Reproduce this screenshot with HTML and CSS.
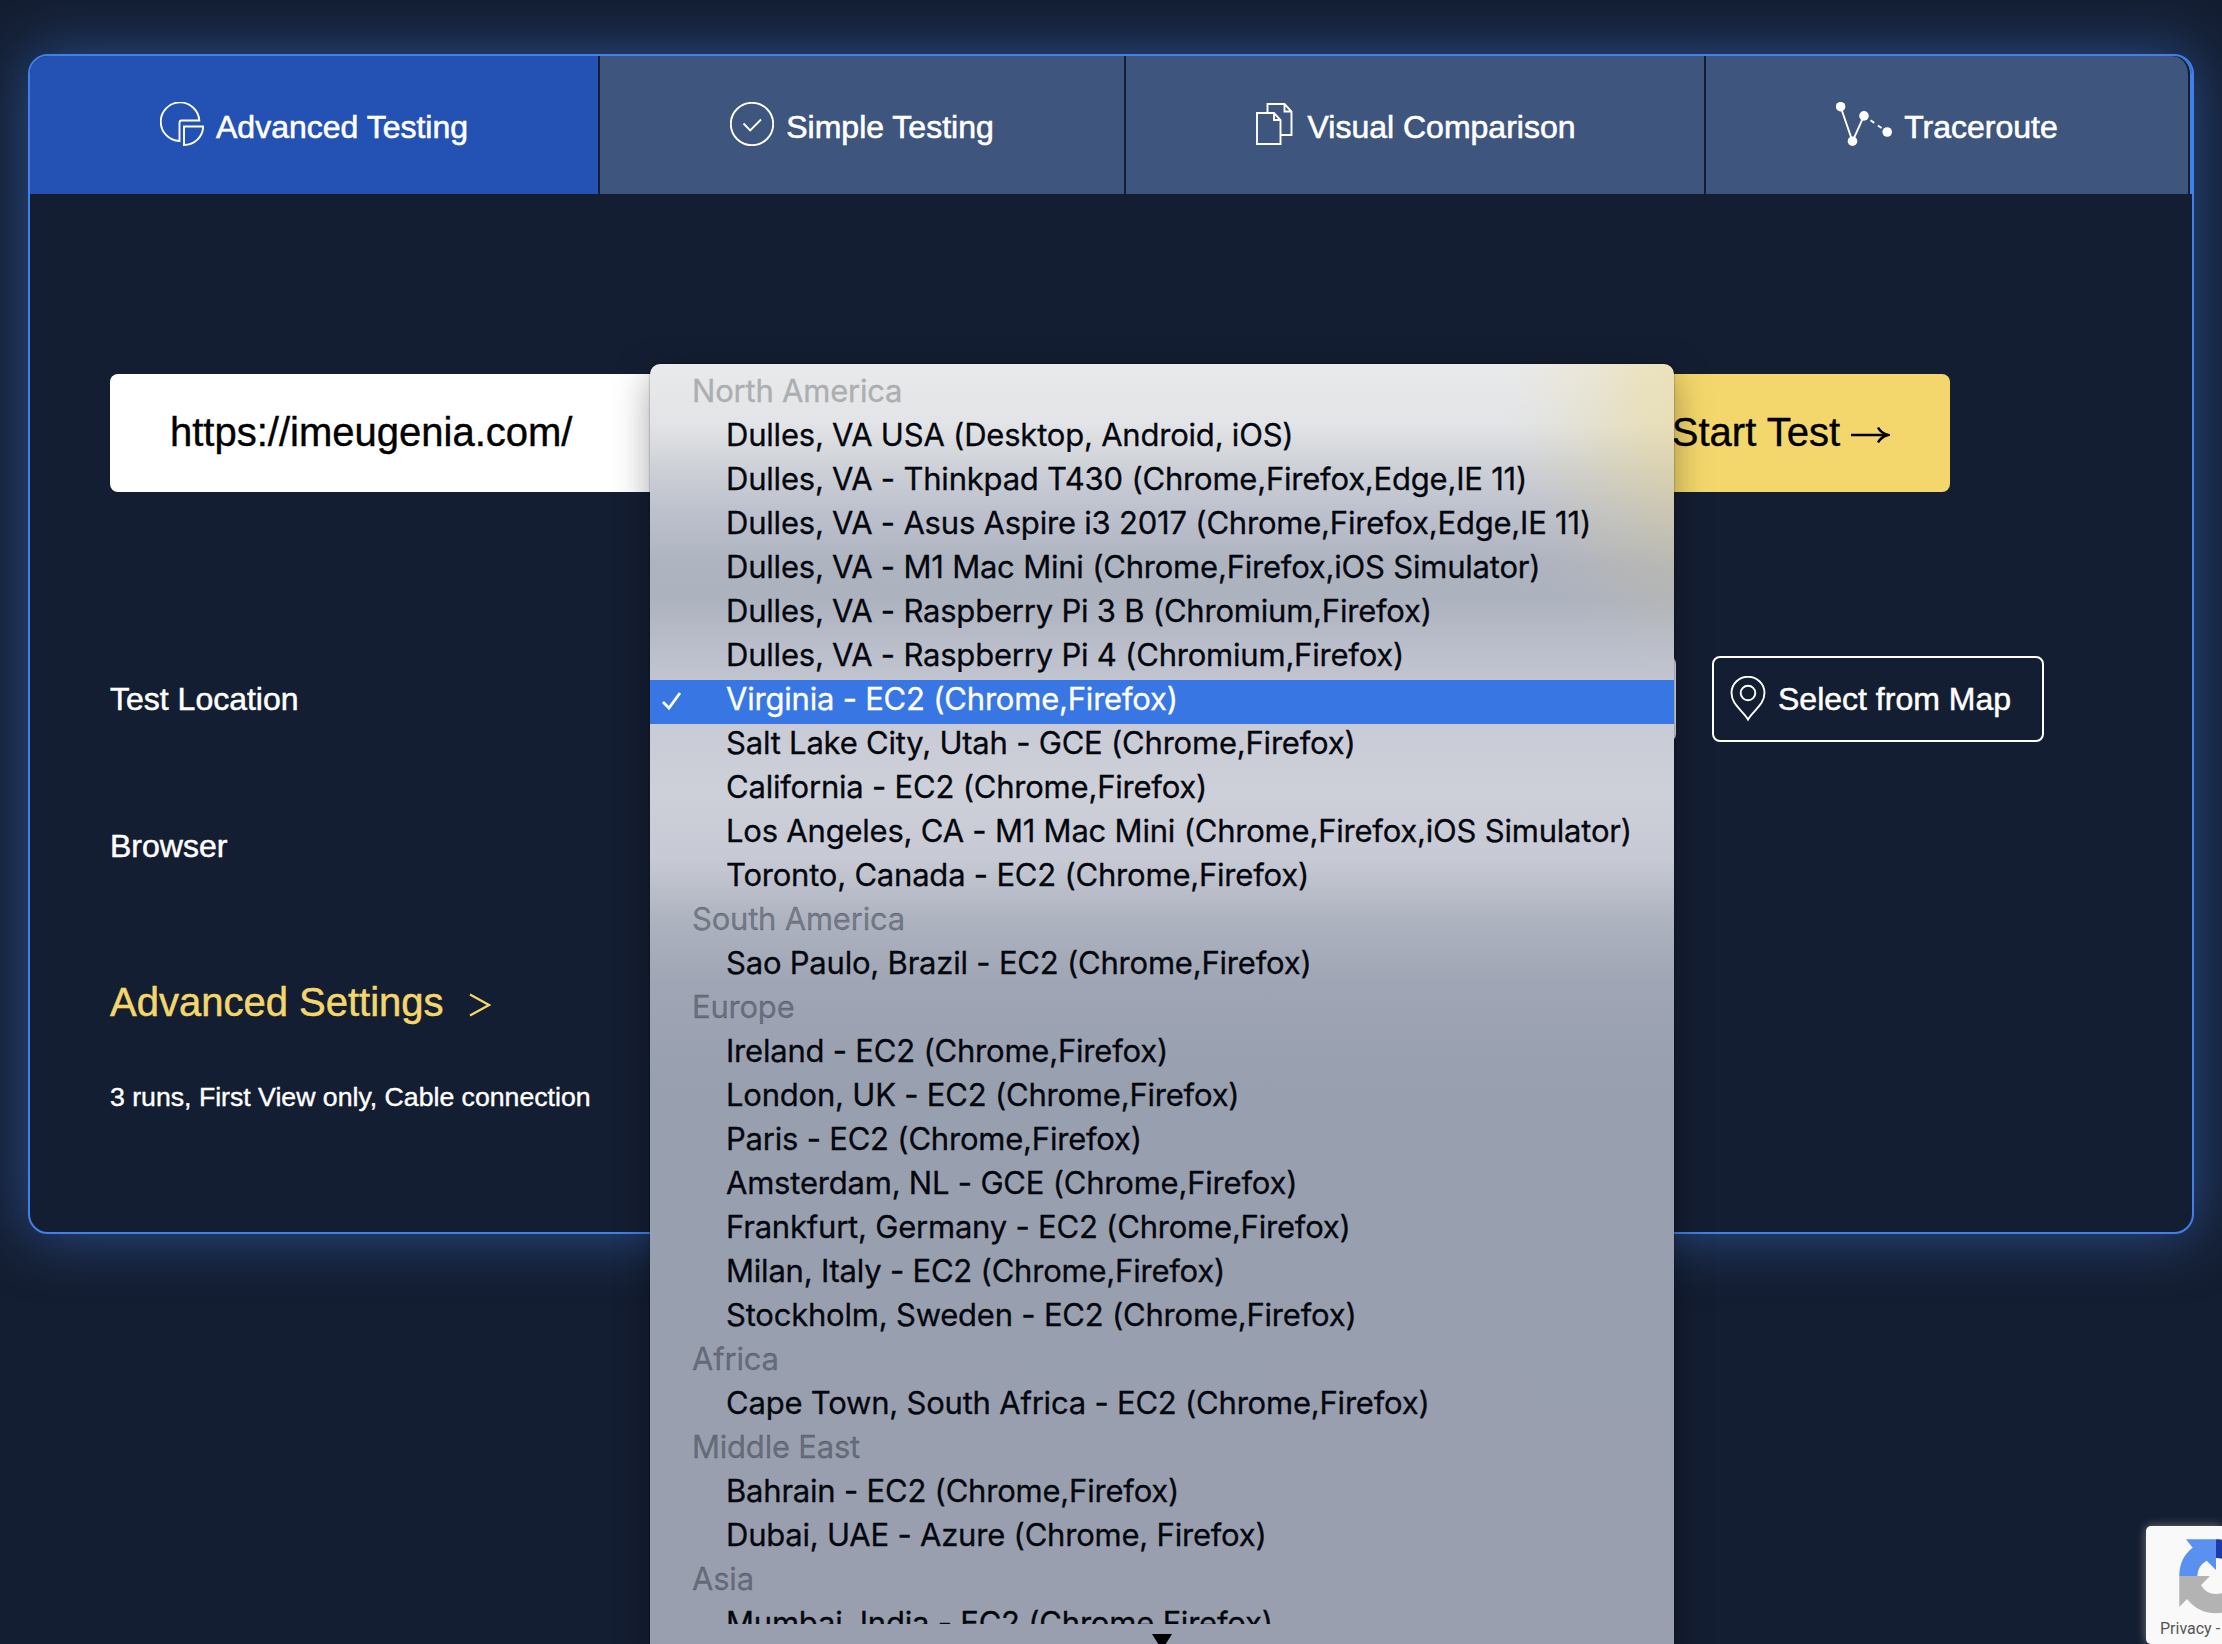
FILE: index.html
```html
<!DOCTYPE html>
<html lang="en">
<head>
<meta charset="utf-8">
<title>Website performance test</title>
<link rel="stylesheet" href="styles.css">
</head>
<body>
<main class="panel">
  <nav class="tabs">
    <a class="tab tab-advanced active">
      <svg class="icon" viewBox="0 0 44 44"><path d="M19.5 39A19.3 19.3 0 1 1 39.3 18.5H21.5Q19.5 18.5 19.5 20.5Z"/><path d="M24 24.5H43.2A19.3 19 0 0 1 24 43Z"/></svg>
      <span>Advanced Testing</span>
    </a>
    <a class="tab tab-simple">
      <svg class="icon" viewBox="0 0 44 44"><circle cx="22" cy="22" r="21.2"/><path d="M13.5 21.5L20.2 28.5L31 17.5"/></svg>
      <span>Simple Testing</span>
    </a>
    <a class="tab tab-visual">
      <svg class="icon" viewBox="0 0 44 44"><path d="M5 11H22L28.5 18V42H5Z M22 11V18H28.5"/><path d="M15.5 11V2H32.5L39.5 9.5V33H28.5 M32.5 2V9.5H39.5"/></svg>
      <span>Visual Comparison</span>
    </a>
    <a class="tab tab-trace">
      <svg class="icon icon-wide" viewBox="0 0 56 44"><path d="M4.6 4.7L16.5 39.3L28 13.7"/><path d="M28 13.7L51.2 30" stroke-dasharray="4.5 4.5" stroke-dashoffset="1"/><g fill="#fff" stroke="none"><circle cx="4.6" cy="4.7" r="4.8"/><circle cx="16.5" cy="39.2" r="4.8"/><circle cx="28" cy="13.9" r="4.8"/><circle cx="51.2" cy="30" r="4.8"/></g></svg>
      <span>Traceroute</span>
    </a>
  </nav>
  <div class="content">
    <div class="url-row">
      <div class="url-input">https://imeugenia.com/</div>
      <div class="start"><span>Start Test</span><svg class="arrow" viewBox="0 0 40 20"><path d="M1 10H37"/><path d="M28 2.5Q31 8 38 10Q31 12 28 17.5"/></svg></div>
    </div>
    <div class="field location">
      <span class="label">Test Location</span>
      <div class="select">
        <div class="menu">
          <ul class="list">
            <li class="group top">North America</li>
            <li>Dulles, VA USA (Desktop, Android, iOS)</li>
            <li>Dulles, VA - Thinkpad T430 (Chrome,Firefox,Edge,IE 11)</li>
            <li>Dulles, VA - Asus Aspire i3 2017 (Chrome,Firefox,Edge,IE 11)</li>
            <li>Dulles, VA - M1 Mac Mini (Chrome,Firefox,iOS Simulator)</li>
            <li>Dulles, VA - Raspberry Pi 3 B (Chromium,Firefox)</li>
            <li>Dulles, VA - Raspberry Pi 4 (Chromium,Firefox)</li>
            <li class="selected"><svg class="check" viewBox="0 0 22 20"><path d="M2 11L8 17L19 2"/></svg>Virginia - EC2 (Chrome,Firefox)</li>
            <li>Salt Lake City, Utah - GCE (Chrome,Firefox)</li>
            <li>California - EC2 (Chrome,Firefox)</li>
            <li>Los Angeles, CA - M1 Mac Mini (Chrome,Firefox,iOS Simulator)</li>
            <li>Toronto, Canada - EC2 (Chrome,Firefox)</li>
            <li class="group">South America</li>
            <li>Sao Paulo, Brazil - EC2 (Chrome,Firefox)</li>
            <li class="group">Europe</li>
            <li>Ireland - EC2 (Chrome,Firefox)</li>
            <li>London, UK - EC2 (Chrome,Firefox)</li>
            <li>Paris - EC2 (Chrome,Firefox)</li>
            <li>Amsterdam, NL - GCE (Chrome,Firefox)</li>
            <li>Frankfurt, Germany - EC2 (Chrome,Firefox)</li>
            <li>Milan, Italy - EC2 (Chrome,Firefox)</li>
            <li>Stockholm, Sweden - EC2 (Chrome,Firefox)</li>
            <li class="group">Africa</li>
            <li>Cape Town, South Africa - EC2 (Chrome,Firefox)</li>
            <li class="group">Middle East</li>
            <li>Bahrain - EC2 (Chrome,Firefox)</li>
            <li>Dubai, UAE - Azure (Chrome, Firefox)</li>
            <li class="group">Asia</li>
            <li>Mumbai, India - EC2 (Chrome,Firefox)</li>
          </ul>
          <div class="more"></div>
        </div>
      </div>
      <div class="map-button">
        <svg class="pin" viewBox="0 0 36 46"><path d="M18 43.5C13 34.5 1.5 29 1.5 16.8A16.5 16 0 0 1 34.5 16.8C34.5 29 23 34.5 18 43.5Z"/><circle cx="18" cy="17" r="7.3"/></svg>
        <span>Select from Map</span>
      </div>
    </div>
    <div class="field browser"><span class="label">Browser</span></div>
    <div class="settings"><span>Advanced Settings</span><svg class="chevron" viewBox="0 0 22 24"><path d="M1 1.5L20 12L1 22.5"/></svg></div>
    <div class="summary">3 runs, First View only, Cable connection</div>
  </div>
</main>
<aside class="recaptcha">
  <svg class="recaptcha-logo" viewBox="0 0 76 76">
    <path fill="#1c3aa9" d="M38 1.3C51 1.3 60 7 66 14L75 5V38H44L54 28Q48 20 38 20Z"/>
    <path fill="#5a91f0" d="M8 1.3H38V32L28.7 22.7Q19.3 28 19.3 38H1.3C1.3 26 6 16 14.7 9.7Z"/>
    <path fill="#b3b3b3" d="M1.3 38H32L23 47Q28 56 38 56Q48 56 55 46L68 59C60 70 50 75.3 38 75.3C26 75.3 16 70 9 61L1.3 69Z"/>
  </svg>
  <span class="recaptcha-text">Privacy - Terms</span>
</aside>
</body>
</html>
```
FILE: styles.css
```css
* { box-sizing: border-box; }

body {
  margin: 0;
  width: 2222px;
  height: 1644px;
  padding: 54px 28px;
  overflow: hidden;
  background: #141e32;
  color: #fff;
  font-family: "Liberation Sans", Arial, sans-serif;
  font-size: 32px;
  line-height: 36px;
}

svg { display: block; flex: none; fill: none; stroke: #fff; stroke-width: 1.9; }

.panel {
  height: 1180px;
  border: 2px solid #4080e8;
  border-radius: 20px;
  background: #141e32;
  box-shadow: 0 0 60px rgba(64, 128, 232, .5);
}

.tabs {
  display: flex;
  height: 138px;
  border-right: 2px solid #4080e8;
  border-radius: 18px 18px 0 0;
  overflow: hidden;
}

.tab {
  display: flex;
  align-items: center;
  justify-content: center;
  gap: 12px;
  border-right: 2px solid #141e32;
  background: #3e567e;
  -webkit-text-stroke: .6px #fff;
}
.tab span { padding-top: 4px; }
.tab-advanced { width: 570px; }
.tab-simple { width: 526px; }
.tab-visual { width: 580px; padding-right: 3px; }
.tab-trace { width: 484px; border-top-right-radius: 18px; }
.active { background: #2352b4; }

.icon { width: 44px; height: 44px; margin-top: -2px; }
.icon-wide { width: 56px; }

.content { padding: 180px 80px 0; }

.url-row {
  display: flex;
  width: 1840px;
  height: 118px;
  border-radius: 8px;
  overflow: hidden;
  color: #000;
  font-size: 40px;
  line-height: 116px;
  -webkit-text-stroke: .4px #000;
}
.url-input { flex: 1; padding-left: 60px; background: #fff; }
.start {
  display: flex;
  justify-content: flex-end;
  gap: 10px;
  width: 338px;
  padding-right: 60px;
  background: #f4d76c;
}
.arrow { width: 40px; height: 20px; margin-top: 51px; stroke: #000; stroke-width: 2.6; }

.field { display: flex; align-items: center; -webkit-text-stroke: .5px #fff; }
.location { height: 86px; margin-top: 164px; }
.label { width: 540px; }
.select {
  position: relative;
  width: 1026px;
  height: 86px;
  border-radius: 8px;
  background: #e4e6ea;
}
.map-button {
  display: flex;
  align-items: center;
  gap: 12px;
  width: 332px;
  height: 86px;
  margin-left: 36px;
  padding-left: 16px;
  border: 2px solid #fff;
  border-radius: 8px;
}
.pin { width: 36px; height: 46px; }

.browser { height: 40px; margin-top: 84px; }

.settings {
  display: flex;
  align-items: center;
  gap: 25px;
  height: 46px;
  margin-top: 113px;
  color: #f4d76c;
  font-size: 40px;
  -webkit-text-stroke: .5px #f4d76c;
}
.chevron { width: 22px; height: 24px; margin-top: 6px; stroke: #f4d76c; stroke-width: 2.2; }
.summary { margin-top: 54px; font-size: 26.67px; -webkit-text-stroke: .4px #fff; }

/* The open list hangs over the whole form and runs past the window's bottom edge */
.menu {
  position: absolute;
  z-index: 2;
  left: 0;
  top: -292px;
  width: 1024px;
  height: 1290px;
  padding-top: 8px;
  border-radius: 10px 10px 0 0;
  background:
    radial-gradient(ellipse 200px 280px at 1050px 40px, rgba(240, 212, 110, .42), rgba(240, 212, 110, .34) 30%, rgba(240, 212, 110, .15) 60%, rgba(240, 212, 110, .03) 85%, rgba(240, 212, 110, 0)),
    linear-gradient(#e9eaeb 0, #e2e4e7 60px, #cdd0d6 105px, #bec2ce 145px, #aeb3c0 200px, #adb2bf 235px, #bcc0cc 290px, #c8cbd5 350px, #cdd0d9 430px, #c7cad4 495px, #aeb3c0 555px, #9fa5b4 620px, #989fae 720px, #999fae 100%);
  box-shadow: 0 0 2px rgba(0, 0, 0, .5), 0 10px 36px rgba(0, 0, 0, .35);
  color: #05070e;
  font-family: Inter, sans-serif;
  font-size: 31px;
  line-height: 38px;
  letter-spacing: -.21px;
  -webkit-text-stroke: .3px currentColor;
}
.list { height: 1252px; margin: 0; padding: 0; overflow: hidden; list-style: none; }
.list li { position: relative; height: 44px; padding-left: 76px; white-space: nowrap; }
.list .group { padding-left: 42px; color: rgba(20, 25, 40, .4); }
.list .top { color: #adaeb0; }
.list .selected { background: #3877e3; color: #fff; }
.check { position: absolute; left: 11px; top: 11px; width: 22px; height: 20px; stroke-width: 2.8; }
.more {
  width: 20px;
  height: 16px;
  margin: 10px auto 0;
  background: #000;
  clip-path: polygon(0 0, 100% 0, 50% 100%);
}

/* Badge pinned to the window corner, partly off screen */
.recaptcha {
  position: absolute;
  left: 2146px;
  top: 1526px;
  width: 76px;
  height: 118px;
  padding: 12px 0 0 14px;
  border-radius: 5px 0 0 5px;
  overflow: hidden;
  background: #f9f9f9;
  box-shadow: 0 0 10px rgba(140, 140, 140, .8);
  color: #555;
  font: 16px/20px Roboto, sans-serif;
}
.recaptcha-logo { width: 76px; height: 76px; margin-left: 18px; stroke: none; }
.recaptcha-text { display: block; margin-top: 5px; white-space: nowrap; }
```
